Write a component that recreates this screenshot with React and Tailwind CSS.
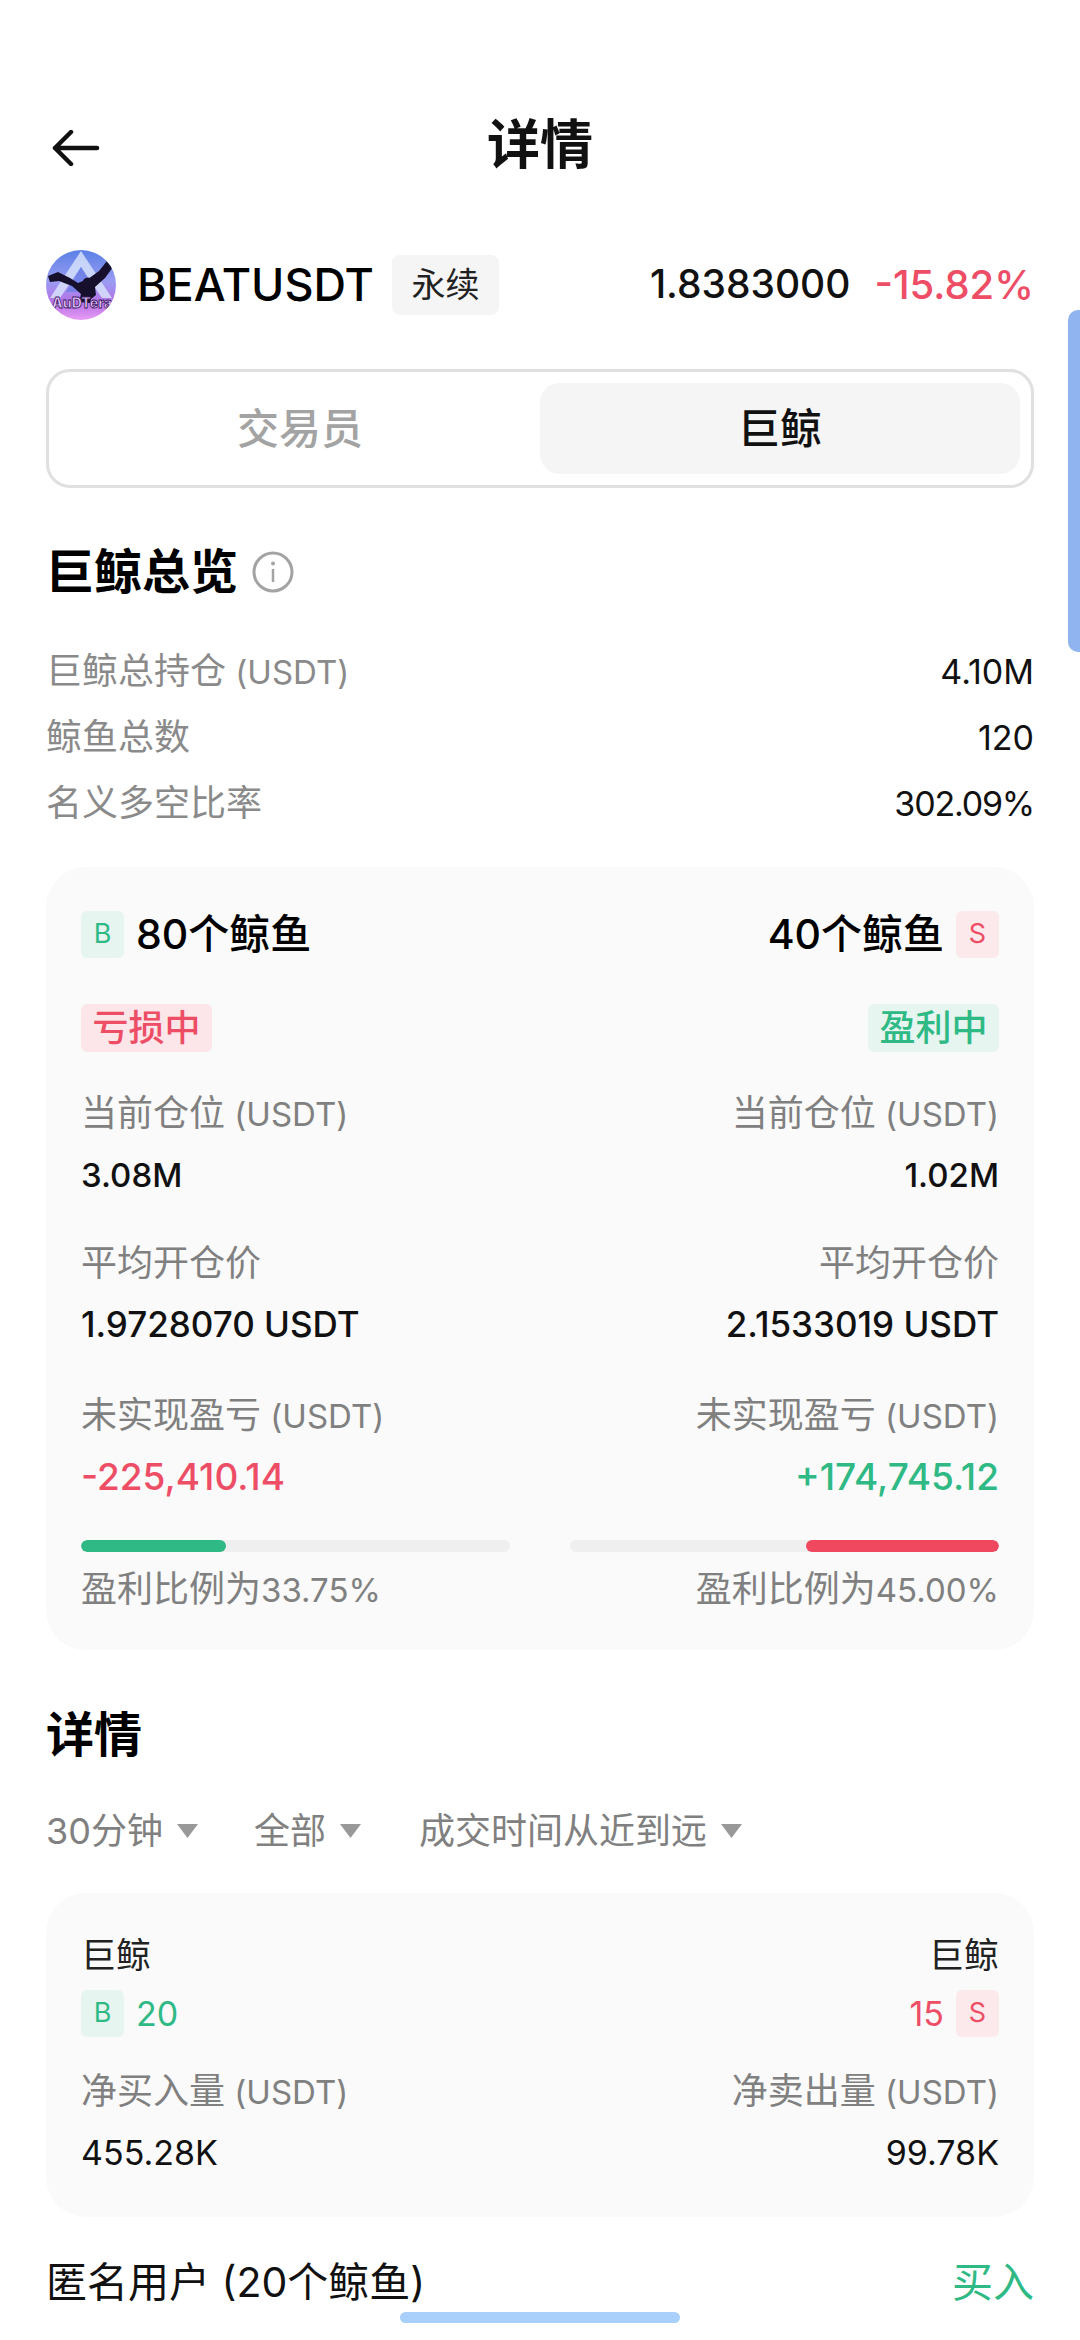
function Avatar() {
  return (
    <svg width="70" height="70" viewBox="0 0 70 70" className="shrink-0">
      <defs>
        <linearGradient id="avbg" x1="0" y1="0" x2="0" y2="1">
          <stop offset="0" stopColor="#5a80e6" />
          <stop offset="0.45" stopColor="#9a9cf2" />
          <stop offset="0.75" stopColor="#b670e6" />
          <stop offset="1" stopColor="#e79cf4" />
        </linearGradient>
        <clipPath id="avclip"><circle cx="35" cy="35" r="35" /></clipPath>
      </defs>
      <g clipPath="url(#avclip)">
        <rect width="70" height="70" fill="url(#avbg)" />
        <path d="M35 1 L66 48 L56 48 L35 17 L14 48 L4 48 Z" fill="#d6e1fc" opacity="0.85" />
        <path d="M35 17 L50 42 L20 42 Z" fill="#6a7ee6" opacity="0.75" />
        <path d="M2 26 L12 22 L24 28 L32 33 L42 29 L53 21 L61 11 L67 17 L59 28 L49 37 L50 45 L45 49 L44 53 L33 52 L35 44 L26 36 L13 31 L4 32 Z" fill="#17102c" />
        <circle cx="42" cy="33" r="5.5" fill="#17102c" />
        <text x="36" y="58" textAnchor="middle" fontSize="14" fontWeight="800" fontFamily="Inter, sans-serif" fill="#e6c6fa" stroke="#3b1a66" strokeWidth="0.8">AuDTera</text>
      </g>
    </svg>
  )
}

function Side({ letter }) {
  const buy = letter === "B"
  return (
    <span className={`flex h-[47px] w-[43px] shrink-0 items-center justify-center rounded-[6px] text-[27px] ${buy ? "bg-[#e6f5ef] text-[#2fb985]" : "bg-[#fce9ec] text-[#ee4d66]"}`}>
      {letter}
    </span>
  )
}

function Caret() {
  return (
    <svg width="21" height="16" viewBox="0 0 21 16" className="shrink-0">
      <path d="M0 1 H21 L10.5 15 Z" fill="#999999" />
    </svg>
  )
}

function Filter({ label, className = "" }) {
  return (
    <div className={`flex items-center gap-[14px] ${className}`}>
      <span className="text-[36px] leading-[50px] text-[#808080]">{label}</span>
      <Caret />
    </div>
  )
}

// the latin part of a label runs narrower than the chinese part
function Label({ text, unit }) {
  return (
    <>
      {text}
      {unit && <span className="text-[33px]"> {unit}</span>}
    </>
  )
}

function StatRow({ label, unit, value, className = "" }) {
  return (
    <div className="flex h-[66px] items-center justify-between">
      <span className="text-[36px] text-[#8a8a8a]"><Label text={label} unit={unit} /></span>
      <span className={`text-[34px] text-[#111111] ${className}`}>{value}</span>
    </div>
  )
}

function Metric({ label, unit, value, right, color = "text-[#111111]", valueSize = "text-[33px] font-medium" }) {
  return (
    <div className={`flex flex-col ${right ? "items-end" : "items-start"}`}>
      <span className="text-[36px] leading-[50px] text-[#808080]"><Label text={label} unit={unit} /></span>
      <span className={`mt-[12px] leading-[48px] ${valueSize} ${color}`}>{value}</span>
    </div>
  )
}

function Bar({ fill, right, color }) {
  return (
    <div className={`flex h-[12px] w-[429px] overflow-hidden rounded-[6px] bg-[#efefef] ${right ? "justify-end" : ""}`}>
      <div className={`h-full rounded-[6px] ${color}`} style={{ width: `${fill}%` }} />
    </div>
  )
}

export default function App() {
  return (
    <div
      className="relative h-[2340px] w-[1080px] overflow-hidden bg-white px-[46px] text-[#111111]"
      style={{ fontFamily: 'Inter, "Noto Sans CJK SC", sans-serif' }}
    >
      {/* header */}
      <div className="mt-[110px] flex h-[70px] items-center justify-between">
        <svg width="52" height="36" viewBox="0 0 52 36" className="ml-[6px] mt-[6px]">
          <path d="M19 2 L3 18 L19 34 M3 18 H45" fill="none" stroke="#111111" strokeWidth="4.5" strokeLinecap="round" strokeLinejoin="round" />
        </svg>
        <h1 className="text-[53px] font-bold leading-[70px] text-[#111111]">详情</h1>
        <div className="w-[58px]" />
      </div>

      {/* pair */}
      <div className="mt-[69px] flex h-[71px] items-center">
        <Avatar />
        <span className="ml-[21px] text-[45px] font-medium text-black">BEATUSDT</span>
        <span className="ml-[18px] flex h-[60px] w-[107px] items-center justify-center rounded-[8px] bg-[#f5f5f5] text-[34px] text-[#222222]">永续</span>
        <span className="ml-auto text-[39px] font-medium text-[#111111]">1.8383000</span>
        <span className="ml-[24px] text-[40px] font-medium text-[#ee4d66]">-15.82%</span>
      </div>

      {/* tabs */}
      <div className="mt-[49px] flex h-[119px] rounded-[24px] border-[3px] border-[#e0e0e0] p-[11px]">
        <div className="flex flex-1 items-center justify-center text-[42px] font-medium text-[#a3a3a3]">交易员</div>
        <div className="flex w-[480px] items-center justify-center rounded-[20px] bg-[#f5f5f5] text-[42px] font-medium text-[#111111]">巨鲸</div>
      </div>

      {/* overview */}
      <div className="mt-[54px] flex h-[60px] items-center gap-[14px]">
        <h2 className="text-[48px] font-bold text-black">巨鲸总览</h2>
        <svg width="42" height="42" viewBox="0 0 42 42">
          <circle cx="21" cy="21" r="19" fill="none" stroke="#a3a3a3" strokeWidth="3" />
          <circle cx="21" cy="12.5" r="2" fill="#a3a3a3" />
          <path d="M21 18 V31" stroke="#a3a3a3" strokeWidth="2.5" />
        </svg>
      </div>

      <div className="mt-[36px]">
        <StatRow label="巨鲸总持仓" unit="(USDT)" value="4.10M" />
        <StatRow label="鲸鱼总数" value="120" />
        <StatRow label="名义多空比率" value="302.09%" className="tracking-[-1.2px]" />
      </div>

      {/* whale summary card */}
      <div className="mt-[31px] h-[783px] rounded-[40px] bg-[#fafafa] px-[35px] pt-[44px]">
        <div className="flex h-[47px] items-center justify-between">
          <div className="flex items-center gap-[12px]">
            <Side letter="B" />
            <span className="text-[41px] font-medium text-black">80个鲸鱼</span>
          </div>
          <div className="flex items-center gap-[12px]">
            <span className="text-[41px] font-medium text-black">40个鲸鱼</span>
            <Side letter="S" />
          </div>
        </div>

        <div className="mt-[46px] flex justify-between">
          <span className="flex h-[48px] w-[131px] items-center justify-center rounded-[6px] bg-[#fce6e9] text-[36px] font-medium text-[#ee4d66]">亏损中</span>
          <span className="flex h-[48px] w-[131px] items-center justify-center rounded-[6px] bg-[#e6f5ef] text-[36px] font-medium text-[#2fb985]">盈利中</span>
        </div>

        <div className="mt-[36px] flex justify-between">
          <Metric label="当前仓位" unit="(USDT)" value="3.08M" />
          <Metric right label="当前仓位" unit="(USDT)" value="1.02M" />
        </div>
        <div className="mt-[39px] flex justify-between">
          <Metric label="平均开仓价" value="1.9728070 USDT" valueSize="text-[35px] font-medium" />
          <Metric right label="平均开仓价" value="2.1533019 USDT" valueSize="text-[35px] font-medium" />
        </div>
        <div className="mt-[42px] flex justify-between">
          <Metric label="未实现盈亏" unit="(USDT)" value="-225,410.14" color="text-[#ee4d66]" valueSize="text-[37px] font-medium" />
          <Metric right label="未实现盈亏" unit="(USDT)" value="+174,745.12" color="text-[#2fb985]" valueSize="text-[37px] font-medium" />
        </div>

        <div className="mt-[39px] flex justify-between">
          <Bar fill={33.75} color="bg-[#2fb985]" />
          <Bar right fill={45} color="bg-[#f0485f]" />
        </div>
        <div className="mt-[12px] flex justify-between text-[36px] leading-[50px] text-[#808080]">
          <span>盈利比例为<span className="text-[33px]">33.75%</span></span>
          <span>盈利比例为<span className="text-[33px]">45.00%</span></span>
        </div>
      </div>

      {/* details */}
      <h2 className="mt-[52px] text-[48px] font-bold leading-[66px] text-black">详情</h2>
      <div className="mt-[38px] flex items-center">
        <Filter label="30分钟" />
        <Filter label="全部" className="ml-[56px]" />
        <Filter label="成交时间从近到远" className="ml-[58px]" />
      </div>

      <div className="mt-[37px] h-[324px] rounded-[40px] bg-[#fafafa] px-[35px] pt-[37px]">
        <div className="flex justify-between text-[35px] leading-[50px] text-[#222222]">
          <span>巨鲸</span>
          <span>巨鲸</span>
        </div>
        <div className="mt-[8px] flex justify-between">
          <div className="flex items-center gap-[12px]">
            <Side letter="B" />
            <span className="text-[34px] text-[#2fb985]">20</span>
          </div>
          <div className="flex items-center gap-[12px]">
            <span className="text-[34px] text-[#ee4d66]">15</span>
            <Side letter="S" />
          </div>
        </div>
        <div className="mt-[27px] flex justify-between">
          <Metric label="净买入量" unit="(USDT)" value="455.28K" valueSize="text-[34px]" />
          <Metric right label="净卖出量" unit="(USDT)" value="99.78K" valueSize="text-[34px]" />
        </div>
      </div>

      <div className="mt-[37px] flex items-center justify-between text-[41px] leading-[56px]">
        <span className="text-[#111111]">匿名用户 (20个鲸鱼)</span>
        <span className="text-[#2fb985]">买入</span>
      </div>

      {/* scroll handle + home indicator sit over the page */}
      <div className="absolute right-0 top-[310px] h-[342px] w-[12px] rounded-l-[10px] bg-[#90b4ef]" />
      <div className="absolute bottom-[17px] left-[400px] h-[11px] w-[280px] rounded-[6px] bg-[#a8d0fb]" />
    </div>
  )
}
